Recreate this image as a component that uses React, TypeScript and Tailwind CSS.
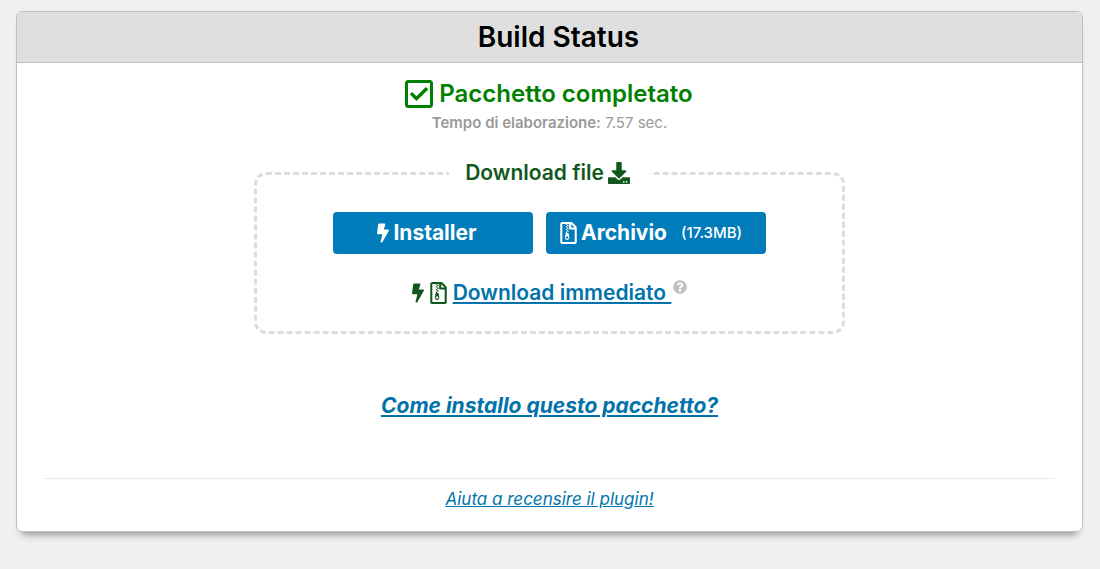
import React from "react";
import {
  FaBolt,
  FaDownload,
  FaQuestionCircle,
  FaRegCheckSquare,
  FaRegFileArchive,
} from "react-icons/fa";

interface BuildResult {
  runtime: string;
  archiveSize: string;
}

const build: BuildResult = {
  runtime: "7.57 sec.",
  archiveSize: "17.3MB",
};

const App: React.FC = () => {
  return (
    <div className="min-h-screen bg-[#f0f0f0] pt-[11px] pr-[17px] pb-9 pl-4 font-['Inter','Liberation_Sans',sans-serif]">
      <main className="overflow-hidden rounded-md border border-[#c0c0c0] bg-white text-center shadow-[0_8px_8px_-6px_#888]">
        <h1 className="border-b border-[#c0c0c0] bg-[#dfdfdf] pt-2 pb-2 pl-[18px] text-[28px] leading-[34px] font-semibold text-black">
          Build Status
        </h1>

        <div className="px-[27px]">
          <h2 className="mt-[15px] flex items-center justify-center gap-1 pr-[3px] text-2xl leading-8 font-semibold text-[#008000]">
            <FaRegCheckSquare className="size-8" />
            Pacchetto completato
          </h2>
          <p className="mt-[3px] text-[15px] leading-5 text-[#999999]">
            <b className="font-semibold">Tempo di elaborazione:</b>{" "}
            {build.runtime}
          </p>

          <DownloadFiles archiveSize={build.archiveSize} />

          <p className="mt-14 text-[21px] leading-8 font-bold italic">
            <a href="#install" className="text-[#0073aa] underline">
              Come installo questo pacchetto?
            </a>
          </p>

          <hr className="mt-14 border-[#eaeaea]" />
          <p className="pt-2 pb-5 text-[17px] leading-6 italic">
            <a href="#review" className="text-[#0073aa] underline">
              Aiuta a recensire il plugin!
            </a>
          </p>
        </div>
      </main>
    </div>
  );
};

const DownloadFiles: React.FC<{ archiveSize: string }> = ({ archiveSize }) => (
  <fieldset className="mx-auto mt-6 w-full max-w-[591px] rounded-xl border-[3px] border-dashed border-[#dddddd] pb-[22px]">
    <legend className="mx-auto px-4 pr-5 text-[21px] leading-8 font-semibold text-[#11581d]">
      <span className="flex items-center gap-1">
        Download file
        <FaDownload className="size-[22px]" />
      </span>
    </legend>

    <div className="mt-[23px] flex justify-center gap-[13px]">
      <button
        type="button"
        className="flex h-[42px] w-[200px] items-center justify-center gap-1 rounded bg-[#007cba] pr-3 text-[21px] font-bold text-white"
      >
        <FaBolt className="h-5 w-3" />
        Installer
      </button>
      <button
        type="button"
        className="flex h-[42px] w-[220px] items-center gap-1 rounded bg-[#007cba] pl-3.5 text-[21px] font-bold text-white"
      >
        <FaRegFileArchive className="h-[22px] w-[17px]" />
        Archivio
        <span className="ml-2.5 text-[15px] font-medium">({archiveSize})</span>
      </button>
    </div>

    <div className="mt-[23px] flex items-center justify-center gap-1.5 text-[21px] leading-8 font-semibold text-[#11581d]">
      <FaBolt className="h-5 w-3" />
      <FaRegFileArchive className="h-[22px] w-[17px]" />
      <a
        href="#download"
        className="-mr-1 whitespace-pre text-[#0073aa] underline"
      >
        {"Download immediato "}
      </a>
      <FaQuestionCircle className="mb-3 size-3.5 text-[#c0c0c0]" />
    </div>
  </fieldset>
);

export default App;
